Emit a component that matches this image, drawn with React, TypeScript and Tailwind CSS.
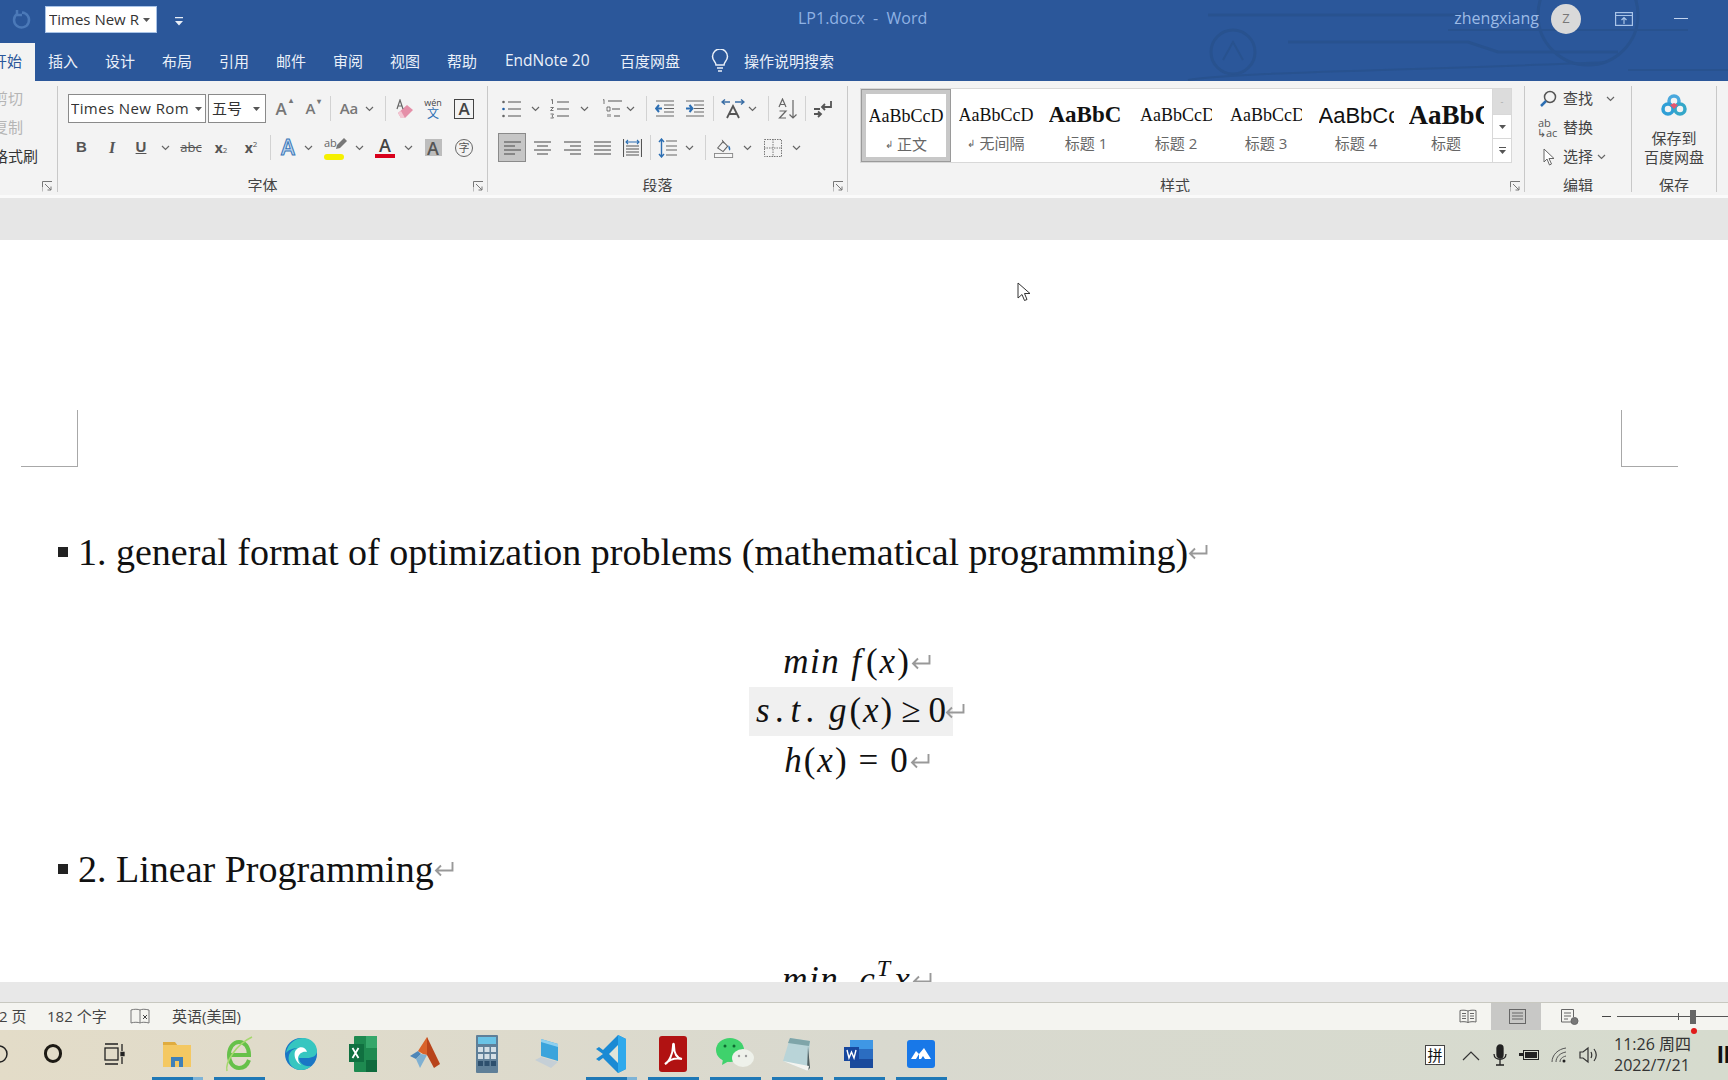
import React from 'react'

const SERIF = "[font-family:'Liberation_Serif','Noto_Sans_CJK_SC',serif]"

const Chev = ({ className = 'text-[#666]' }: { className?: string }) => (
  <svg width="9" height="6" viewBox="0 0 9 6" className={`shrink-0 ${className}`} fill="none" stroke="currentColor" strokeWidth="1.2">
    <path d="M1 1l3.5 3.5L8 1" />
  </svg>
)

const Tri = () => (
  <svg width="7" height="4" viewBox="0 0 7 4" className="shrink-0 text-[#555]" fill="currentColor">
    <path d="M0 0h7L3.5 4z" />
  </svg>
)

const Slot = ({ className, children }: { className: string; children?: React.ReactNode }) => (
  <div className={`flex h-full shrink-0 items-center justify-center ${className}`}>{children}</div>
)

const Sep = () => <div className="h-[25px] w-px shrink-0 bg-[#d2d2d2]" />

const Launcher = ({ className }: { className: string }) => (
  <svg width="11" height="11" viewBox="0 0 11 11" className={`absolute ${className}`} fill="none" stroke="#777" strokeWidth="1">
    <path d="M.5 6V.5H10M3 3l6 6M9 5.5V9H5.5" />
    <path d="M.5 6v4.5" stroke="#bbb" />
  </svg>
)

const Lines = ({ kind }: { kind: 'left' | 'center' | 'right' | 'justify' }) => {
  const rows = {
    left: ['M1 2h17', 'M1 6h11', 'M1 10h17', 'M1 14h11'],
    center: ['M1 2h17', 'M4 6h11', 'M1 10h17', 'M4 14h11'],
    right: ['M1 2h17', 'M7 6h11', 'M1 10h17', 'M7 14h11'],
    justify: ['M1 2h17', 'M1 6h17', 'M1 10h17', 'M1 14h17'],
  }[kind]
  return (
    <svg width="19" height="16" viewBox="0 0 19 16" fill="none" stroke="#555" strokeWidth="1.1">
      {rows.map((d) => <path key={d} d={d} />)}
    </svg>
  )
}

const ListIcon = ({ kind }: { kind: 'bullet' | 'number' | 'multi' }) => (
  <svg width="22" height="20" viewBox="0 0 22 20" fill="none" stroke="#555" strokeWidth="1.1">
    {kind === 'bullet' && (
      <>
        <path d="M7 3h13M7 10h13M7 17h13" />
        <circle cx="2.5" cy="3" r="1.3" fill="#666" stroke="none" />
        <circle cx="2.5" cy="10" r="1.3" fill="#1f5fa8" stroke="none" />
        <circle cx="2.5" cy="17" r="1.3" fill="#666" stroke="none" />
      </>
    )}
    {kind === 'number' && (
      <>
        <path d="M8 3h12M8 10h12M8 17h12" />
        <path d="M2 1l1.5-.5V5M1.5 8.5h3l-3 3h3M1.5 15h3l-1.5 2 1.5 2h-3" strokeWidth=".8" />
      </>
    )}
    {kind === 'multi' && (
      <>
        <path d="M7 2h14M11 10h8M13 17h6" />
        <path d="M2 1l1-.5V5M6 8h3v4H6zM7 15v3M9 15v3" strokeWidth=".8" />
      </>
    )}
  </svg>
)

const Indent = ({ flip }: { flip?: boolean }) => (
  <svg width="20" height="17" viewBox="0 0 20 17" fill="none" stroke="#666" strokeWidth="1">
    <path d="M1 1h18M9 5h10M9 8.500h10M9 12h10M1 16h18" />
    <path d={flip ? 'M1 8.500h6M4.500 5l3 3.500-3 3.500' : 'M7 8.500H1M4 5L1 8.500 4 12'} stroke="#2d6fb3" strokeWidth="2" />
  </svg>
)

const Eraser = () => (
  <svg width="20" height="20" viewBox="0 0 20 20">
    <path d="M3 14l9-8 6 5-8 8H6z" fill="#e58fa8" />
    <path d="M3 14l3 5h4l-4-7z" fill="#f3c7d3" />
    <path d="M2 10L5 1l3 9M3 7h4" fill="none" stroke="#666" strokeWidth="1.200" />
  </svg>
)

const Highlighter = () => (
  <div className="relative flex h-[24px] w-[24px] flex-col items-start">
    <span className="text-[11px] leading-[13px] text-[#666]">ab</span>
    <svg width="14" height="14" viewBox="0 0 14 14" className="absolute right-0 top-[1px]">
      <path d="M10 1l3 3-7 7-4 1 1-4z" fill="#777" />
    </svg>
    <span className="absolute bottom-0 left-0 h-[6px] w-[20px] rounded-full bg-[#f5f000]" />
  </div>
)

const FillBucket = () => (
  <svg width="22" height="22" viewBox="0 0 22 22" fill="none">
    <path d="M4 11l6-7 5 5-5 6z" stroke="#666" strokeWidth="1.200" />
    <path d="M9 2l2 4" stroke="#666" />
    <path d="M16 8c2 2 2.500 4 1.500 6-1-1-2-2-1.500-6z" fill="#2d6fb3" />
    <rect x=".5" y="17" width="20" height="4.500" fill="#f6f6f6" stroke="#888" />
  </svg>
)

const Borders = () => (
  <svg width="18" height="18" viewBox="0 0 18 18" fill="none" stroke="#777" strokeWidth="1" strokeDasharray="1.500 1">
    <rect x=".5" y=".5" width="17" height="17" />
    <path d="M9 0v18M0 9h18" />
  </svg>
)

const Sort = () => (
  <svg width="20" height="22" viewBox="0 0 20 22" fill="none">
    <path d="M1 9l3.500-8L8 9M2 6.500h5" stroke="#666" strokeWidth="1.200" />
    <path d="M1.500 13H8l-6.500 7H8" stroke="#666" strokeWidth="1.200" />
    <path d="M15 2v18M11.500 16.500L15 20l3.500-3.500" stroke="#666" strokeWidth="1.200" />
  </svg>
)

const Pilcrow = () => (
  <svg width="20" height="18" viewBox="0 0 20 18" fill="none" stroke="#555" strokeWidth="1.800">
    <path d="M18 1v6h-9M12 4L9 7l3 3" />
    <path d="M1 9h6M1 14h7M5 11.500L8 14l-3 3" />
  </svg>
)

const Direction = () => (
  <svg width="24" height="20" viewBox="0 0 24 20" fill="none" stroke="#555" strokeWidth="1.800">
    <path d="M6 19l6-12 6 12M8 15h8" />
    <path d="M1 3h8M4 0.500L1 3l3 2.500M14 3h9M20 0.500L23 3l-3 2.500" stroke="#3a6ea5" strokeWidth="1.400" />
  </svg>
)

const LineSpacing = () => (
  <svg width="20" height="20" viewBox="0 0 20 20" fill="none">
    <path d="M8 3h11M8 8h11M8 12h11M8 17h11" stroke="#666" strokeWidth="1.100" />
    <path d="M3.500 1v18M1 4l2.500-3L6 4M1 16l2.500 3L6 16" stroke="#2d6fb3" strokeWidth="1.400" />
  </svg>
)

const Distributed = () => (
  <svg width="19" height="20" viewBox="0 0 19 20" fill="none" stroke="#555" strokeWidth="1.100">
    <path d="M.5 1v18M18.500 1v18M3 8h13M3 11h13M3 14h13M3 17h13" />
    <path d="M3 4h13M5 2L3 4l2 2M14 2l2 2-2 2" stroke="#2d6fb3" />
  </svg>
)

const BaiduCloud = () => (
  <svg width="28" height="24" viewBox="0 0 28 24" fill="none">
    <circle cx="14" cy="8" r="5" stroke="#4aa8dd" strokeWidth="3.500" />
    <circle cx="8" cy="16" r="5" stroke="#2f9fd6" strokeWidth="3.500" />
    <circle cx="20" cy="16" r="5" stroke="#34a7c9" strokeWidth="3.500" />
    <path d="M10 12l4-2 4 2-4 4z" fill="#e4566f" />
  </svg>
)

const Arrow = ({ className = '' }: { className?: string }) => (
  <svg width="20" height="16" viewBox="0 0 20 16" className={`relative shrink-0 ${className}`} fill="none" stroke="#999" strokeWidth="1.900">
    <path d="M18.500 1v8.500H2M7 4.500l-5 5 5 5" />
  </svg>
)

const Cursor = () => (
  <svg width="14" height="21" viewBox="0 0 14 21" className="absolute left-[1017px] top-[282px]" fill="#fff" stroke="#333" strokeWidth="1">
    <path d="M1 1v15l4-3.500 2.500 6 2.500-1-2.500-6H13z" />
  </svg>
)

const BackgroundArt = () => (
  <svg className="absolute right-0 top-0" width="640" height="81" viewBox="0 0 640 81" fill="none" stroke="#28528f" strokeWidth="2">
    <circle cx="145" cy="52" r="22" strokeWidth="3" />
    <path d="M135 60l10-18 10 18" />
    <path d="M120 15h260M200 42h180l30 10h120" strokeWidth="3" />
    <circle cx="500" cy="15" r="50" strokeWidth="3" />
    <path d="M100 80c40-8 240-10 420-18M360 30h240M540 70h100" />
  </svg>
)

const LABEL = 'absolute -bottom-[5px] left-0 right-0 text-center text-[15px] leading-[24px] text-[#444]'

const TitleBar = () => (
  <div className="relative flex h-[43px] shrink-0 items-start bg-[#2b579a]">
    <BackgroundArt />
    <svg width="22" height="22" viewBox="0 0 22 22" className="ml-[11px] mt-[8px] shrink-0" fill="none" stroke="#4b79b8" strokeWidth="2.500">
      <path d="M6 6a7.500 7.500 0 1 0 5-1.500M6 2v5h5" />
    </svg>
    <div className="relative ml-[12px] mt-[6px] flex h-[27px] w-[112px] items-center overflow-hidden border border-[#a9c4e8] bg-white pl-[3px] text-[15px] text-[#333]">
      <span className="w-[90px] overflow-hidden whitespace-nowrap">Times New Roman</span>
      <span className="ml-[4px]"><Tri /></span>
    </div>
    <svg width="10" height="12" viewBox="0 0 10 12" className="ml-[17px] mt-[16px]" fill="#e8eef7">
      <path d="M1 1h8v1.200H1zM1 5h8L5 9.500z" />
    </svg>
    <div className="relative ml-[614px] mt-[6px] whitespace-nowrap text-[16px] text-[#8fb2e4]">LP1.docx&nbsp; - &nbsp;Word</div>
    <div className="relative ml-[527px] mt-[6px] whitespace-nowrap text-[16px] text-[#9dbbe6]">zhengxiang</div>
    <div className="relative ml-[12px] mt-[4px] flex h-[30px] w-[30px] items-center justify-center rounded-full bg-[#d9d9d9] text-[13px] text-[#777]">Z</div>
    <svg width="18" height="14" viewBox="0 0 18 14" className="relative ml-[34px] mt-[12px]" fill="none" stroke="#a9c4e8" strokeWidth="1.200">
      <rect x=".6" y=".6" width="16.800" height="12.800" />
      <path d="M.6 3.500h16.800M9 12V6M6.500 8L9 5.500 11.500 8" />
    </svg>
    <div className="relative ml-[41px] mt-[18px] h-px w-[14px] bg-[#c3d4ee]" />
  </div>
)

const TABS = ['插入', '设计', '布局', '引用', '邮件', '审阅', '视图', '帮助']

const TabBar = () => (
  <div className="flex h-[38px] shrink-0 items-center bg-[#2b579a] pb-[2px] text-[15px] text-[#eaf0f9]">
    <div className="-mb-[2px] flex h-[38px] w-[35px] shrink-0 items-center justify-end overflow-hidden bg-[#f3f3f3] pb-[2px] pr-[13px] text-[#2b579a]">
      <span className="shrink-0 whitespace-nowrap">开始</span>
    </div>
    <div className="ml-[13px] flex gap-[27px]">
      {TABS.map((tab) => (
        <div key={tab} className="w-[30px] shrink-0 whitespace-nowrap text-center">{tab}</div>
      ))}
    </div>
    <div className="ml-[28px] w-[90px] shrink-0 whitespace-nowrap text-[15.500px]">EndNote 20</div>
    <div className="ml-[25px] whitespace-nowrap">百度网盘</div>
    <svg width="18" height="24" viewBox="0 0 18 24" className="ml-[31px]" fill="none" stroke="#eaf0f9" strokeWidth="1.500">
      <path d="M5 16c0-3-3.500-4.500-3.500-8.500a7.500 7.500 0 0 1 15 0C16.500 11.500 13 13 13 16z" />
      <path d="M6 19h6M7 22h4" />
    </svg>
    <div className="ml-[15px] whitespace-nowrap">操作说明搜索</div>
  </div>
)

const ClipboardGroup = () => (
  <div className="relative h-[106px] w-[58px] shrink-0 overflow-hidden border-r border-[#c8c8c8] text-[15px]">
    <div className="-ml-[7px] flex w-[60px] flex-col whitespace-nowrap">
      <span className="h-[29px] leading-[24px] text-[#b5b5b5]">剪切</span>
      <span className="h-[29px] leading-[24px] text-[#b5b5b5]">复制</span>
      <span className="leading-[24px] text-[#333]">格式刷</span>
    </div>
    <Launcher className="bottom-0 right-[4px]" />
  </div>
)

const FontGroup = () => (
  <div className="relative h-[106px] w-[430px] shrink-0 overflow-hidden border-r border-[#c8c8c8] pt-[8px] text-[#555]">
    <div className="flex h-[29px] items-center pl-[10px]">
      <div className="flex h-full w-[138px] shrink-0 items-center justify-between border border-[#8a8a8a] bg-white pl-[2px] pr-[3px] text-[15px] text-[#333]">
        <span className="w-[120px] overflow-hidden whitespace-nowrap tracking-[0.4px]">Times New Rom</span>
        <Tri />
      </div>
      <div className="ml-[2px] flex h-full w-[58px] shrink-0 items-center justify-between border border-[#8a8a8a] bg-white px-[3px] pr-[5px] text-[15px] text-[#333]">
        <span>五号</span>
        <Tri />
      </div>
      <Slot className="w-[30px] text-[17px] font-semibold text-[#777]"><span className="relative">A<span className="absolute -right-[6px] -top-[2px] text-[8px]">▴</span></span></Slot>
      <Slot className="w-[29px] text-[15px] font-semibold text-[#777]"><span className="relative">A<span className="absolute -right-[6px] -top-[2px] text-[8px]">▾</span></span></Slot>
      <Slot className="w-[10px]"><Sep /></Slot>
      <Slot className="w-[28px] text-[15px] font-semibold text-[#777]">Aa</Slot>
      <Slot className="w-[12px]"><Chev /></Slot>
      <Slot className="w-[20px]"><Sep /></Slot>
      <Slot className="w-[20px]"><Eraser /></Slot>
      <Slot className="w-[36px]">
        <div className="flex flex-col items-center text-[9px] leading-[10px] text-[#444]">
          <span>wén</span>
          <span className="text-[12px] leading-[12px] text-[#2d6fb3]">文</span>
        </div>
      </Slot>
      <Slot className="w-[26px]">
        <div className="flex h-[20px] w-[20px] items-center justify-center border border-[#444] text-[17px] font-semibold leading-none text-[#444]">A</div>
      </Slot>
    </div>
    <div className="mt-[10px] flex h-[29px] items-center pl-[8px]">
      <Slot className="w-[31px] [font-family:'Liberation_Sans'] text-[15px] font-bold">B</Slot>
      <Slot className="w-[30px] [font-family:'Liberation_Serif'] text-[16px] font-bold italic">I</Slot>
      <Slot className="w-[28px] [font-family:'Liberation_Sans'] text-[15px] font-bold underline">U</Slot>
      <Slot className="w-[20px]"><Chev /></Slot>
      <Slot className="w-[32px] text-[13px] line-through">abc</Slot>
      <Slot className="w-[28px] text-[14px] font-bold">x<sub className="text-[8px] font-normal">2</sub></Slot>
      <Slot className="w-[32px] text-[14px] font-bold">x<sup className="text-[8px] font-normal">2</sup></Slot>
      <Slot className="w-[6px]"><Sep /></Slot>
      <Slot className="w-[30px] text-[21px] font-semibold text-[#bcd6f0] [-webkit-text-stroke:1px_#3c78b8]">A</Slot>
      <Slot className="w-[10px]"><Chev /></Slot>
      <Slot className="ml-[6px] w-[34px]"><Highlighter /></Slot>
      <Slot className="w-[12px]"><Chev /></Slot>
      <Slot className="w-[40px]">
        <div className="flex flex-col items-center">
          <span className="text-[18px] font-semibold leading-[17px] text-[#444]">A</span>
          <span className="h-[4px] w-[20px] bg-[#d9001b]" />
        </div>
      </Slot>
      <Slot className="w-[6px]"><Chev /></Slot>
      <Slot className="w-[44px]">
        <div className="flex h-[17px] w-[17px] items-center justify-center bg-[#bdbdbd] text-[18px] font-semibold leading-none">A</div>
      </Slot>
      <Slot className="w-[18px]">
        <div className="flex h-[18px] w-[18px] shrink-0 items-center justify-center rounded-full border border-[#666] text-[11px] leading-none">字</div>
      </Slot>
    </div>
    <div className={`${LABEL} pr-[20px]`}>字体</div>
    <Launcher className="bottom-0 right-[3px]" />
  </div>
)

const ParagraphGroup = () => (
  <div className="relative h-[106px] w-[360px] shrink-0 overflow-hidden border-r border-[#c8c8c8] pt-[8px]">
    <div className="flex h-[29px] items-center pl-[10px]">
      <Slot className="w-[28px]"><ListIcon kind="bullet" /></Slot>
      <Slot className="w-[18px]"><Chev /></Slot>
      <Slot className="w-[32px]"><ListIcon kind="number" /></Slot>
      <Slot className="w-[16px]"><Chev /></Slot>
      <Slot className="ml-[4px] w-[32px]"><ListIcon kind="multi" /></Slot>
      <Slot className="w-[4px]"><Chev /></Slot>
      <Slot className="ml-[10px] w-[8px]"><Sep /></Slot>
      <Slot className="w-[30px]"><Indent /></Slot>
      <Slot className="w-[30px]"><Indent flip /></Slot>
      <Slot className="w-[6px]"><Sep /></Slot>
      <Slot className="w-[34px]"><Direction /></Slot>
      <Slot className="w-[4px]"><Chev /></Slot>
      <Slot className="ml-[10px] w-[8px]"><Sep /></Slot>
      <Slot className="w-[32px]"><Sort /></Slot>
      <Slot className="w-[2px]"><Sep /></Slot>
      <Slot className="w-[34px]"><Pilcrow /></Slot>
    </div>
    <div className="mt-[10px] flex h-[29px] items-center pl-[10px]">
      <Slot className="w-[28px] border border-[#8a8a8a] bg-[#c6c6c6]"><Lines kind="left" /></Slot>
      <Slot className="w-[32px]"><Lines kind="center" /></Slot>
      <Slot className="w-[28px]"><Lines kind="right" /></Slot>
      <Slot className="w-[32px]"><Lines kind="justify" /></Slot>
      <Slot className="w-[28px]"><Distributed /></Slot>
      <Slot className="w-[8px]"><Sep /></Slot>
      <Slot className="w-[28px]"><LineSpacing /></Slot>
      <Slot className="w-[14px]"><Chev /></Slot>
      <Slot className="w-[18px]"><Sep /></Slot>
      <Slot className="w-[20px]"><FillBucket /></Slot>
      <Slot className="w-[26px]"><Chev /></Slot>
      <Slot className="w-[26px]"><Borders /></Slot>
      <Slot className="w-[20px]"><Chev /></Slot>
    </div>
    <div className={`${LABEL} pr-[20px]`}>段落</div>
    <Launcher className="bottom-0 right-[3px]" />
  </div>
)

const STYLES = [
  { preview: 'AaBbCcD', label: '正文', mark: true, font: `${SERIF} w-[75px] text-[18px]` },
  { preview: 'AaBbCcD', label: '无间隔', mark: true, font: `${SERIF} w-[75px] text-[18px]` },
  { preview: 'AaBbC', label: '标题 1', mark: false, font: `${SERIF} w-[75px] text-[23px] font-bold` },
  { preview: 'AaBbCcDd', label: '标题 2', mark: false, font: `${SERIF} w-[72px] text-[18px]` },
  { preview: 'AaBbCcDd', label: '标题 3', mark: false, font: `${SERIF} w-[72px] text-[18px]` },
  { preview: 'AaBbCcDd', label: '标题 4', mark: false, font: "[font-family:'Liberation_Sans'] w-[75px] text-[22px] font-light" },
  { preview: 'AaBbCc', label: '标题', mark: false, font: `${SERIF} w-[75px] text-[27px] font-bold` },
]

const StylesGroup = () => (
  <div className="relative h-[106px] w-[677px] shrink-0 overflow-hidden border-r border-[#c8c8c8] pl-[12px] pt-[2px]">
    <div className="flex h-[75px] w-[652px] border border-[#d8d8d8] bg-white">
      {STYLES.map((style, index) => (
        <div
          key={style.label}
          className={`flex h-full w-[90px] shrink-0 flex-col items-center ${index === 0 ? 'border border-[#9a9a9a] shadow-[inset_0_0_0_4px_#c8c8c8]' : ''}`}
        >
          <div className={`mt-[11px] flex h-[30px] items-center justify-start overflow-hidden whitespace-nowrap text-[#111] ${style.font}`}>
            {style.preview}
          </div>
          <div className="mt-[3px] flex items-center whitespace-nowrap text-[15px] leading-[20px] text-[#666]">
            {style.mark && <span className="mr-[4px] text-[10px]">↲</span>}
            {style.label}
          </div>
        </div>
      ))}
      <div className="ml-auto flex w-[19px] shrink-0 flex-col border-l border-[#d8d8d8] text-[#555]">
        <div className="flex h-[26px] items-center justify-center border-b border-[#d8d8d8] bg-[#dcdcdc] text-[9px] text-[#aaa]">-</div>
        <div className="flex h-[24px] items-center justify-center border-b border-[#d8d8d8]"><Tri /></div>
        <div className="flex flex-1 flex-col items-center justify-center gap-[2px]">
          <span className="h-px w-[7px] bg-[#555]" />
          <Tri />
        </div>
      </div>
    </div>
    <div className={`${LABEL} pr-[22px]`}>样式</div>
    <Launcher className="bottom-0 right-[3px]" />
  </div>
)

const EditGroup = () => (
  <div className="relative h-[106px] w-[107px] shrink-0 overflow-hidden border-r border-[#c8c8c8] text-[15px] text-[#444]">
    <div className="-mt-[2px] flex h-[29px] items-center pl-[14px]">
      <svg width="18" height="18" viewBox="0 0 18 18" fill="none" className="shrink-0">
        <circle cx="11" cy="7" r="5.500" stroke="#555" strokeWidth="1.500" />
        <path d="M7 11l-5 5" stroke="#2d6fb3" strokeWidth="2.500" />
      </svg>
      <span className="ml-[6px] w-[30px] whitespace-nowrap">查找</span>
      <span className="ml-[13px]"><Chev /></span>
    </div>
    <div className="flex h-[29px] items-center pl-[13px]">
      <div className="flex w-[21px] shrink-0 flex-col text-[11px] leading-[10px] text-[#555]">
        <span>ab</span>
        <span className="-ml-[1px] whitespace-nowrap">↳ac</span>
      </div>
      <span className="ml-[4px] whitespace-nowrap">替换</span>
    </div>
    <div className="flex h-[29px] items-center pl-[18px]">
      <svg width="12" height="18" viewBox="0 0 12 18" fill="#fff" stroke="#666" className="shrink-0">
        <path d="M1 1v13l3-3 2.500 6 2-1-2.500-5.500H11z" />
      </svg>
      <span className="ml-[8px] whitespace-nowrap">选择</span>
      <span className="ml-[4px]"><Chev /></span>
    </div>
    <div className={LABEL}>编辑</div>
  </div>
)

const SaveGroup = () => (
  <div className="relative h-[106px] w-[85px] shrink-0 overflow-hidden border-r border-[#c8c8c8] text-[15px] text-[#444]">
    <div className="flex flex-col items-center pt-[7px]">
      <BaiduCloud />
      <span className="mt-[12px] leading-[19px]">保存到</span>
      <span className="leading-[19px]">百度网盘</span>
    </div>
    <div className={LABEL}>保存</div>
  </div>
)

const Ribbon = () => (
  <div className="flex h-[117px] shrink-0 items-start overflow-hidden border-b-[3px] border-[#fafafa] bg-[#f3f3f3] pt-[5px]">
    <ClipboardGroup />
    <FontGroup />
    <ParagraphGroup />
    <StylesGroup />
    <EditGroup />
    <SaveGroup />
  </div>
)

const Heading = ({ text, className }: { text: string; className: string }) => (
  <div className={`flex h-[50px] items-center pl-[58px] ${SERIF} text-[38px] leading-none text-[#111] ${className}`}>
    <span className="mr-[10px] h-[10px] w-[10px] shrink-0 bg-[#222]" />
    <span className="whitespace-nowrap">{text}</span>
    <Arrow />
  </div>
)

const Equation = ({ children, shaded }: { children: React.ReactNode; shaded?: boolean }) => (
  <div className="flex h-[49.500px] items-center justify-center pr-[14px]">
    <span className={`${SERIF} inline-flex h-full items-center whitespace-pre text-[35px] italic text-[#111] ${shaded ? 'bg-[#f0f0f0] pl-[7px] pr-[7px]' : ''}`}>
      {children}
    </span>
    <Arrow className={shaded ? '-ml-[8px]' : 'ml-[2px]'} />
  </div>
)

const Document = () => (
  <div className="relative h-[742px] shrink-0 overflow-hidden bg-white pt-[170px]">
    <div className="flex justify-between pl-[21px] pr-[50px]">
      <div className="h-[57px] w-[57px] border-b border-r border-[#a8a8a8]" />
      <div className="h-[57px] w-[57px] border-b border-l border-[#a8a8a8]" />
    </div>
    <Heading className="mt-[60px]" text="1. general format of optimization problems (mathematical programming)" />
    <div className="mt-[60px]">
      <Equation>
        <span className="tracking-[1.500px]">min</span>
        <span className="ml-[11px]">f</span>
        <span className="ml-[5px] not-italic">(</span>
        <span className="mx-[2px]">x</span>
        <span className="not-italic">)</span>
      </Equation>
      <Equation shaded>
        <span className="tracking-[6px]">s.t.</span>
        <span className="ml-[8px]">g</span>
        <span className="ml-[3px] not-italic">(</span>
        <span className="mx-[2px]">x</span>
        <span className="not-italic">)</span>
        <span className="ml-[9px] not-italic">≥</span>
        <span className="ml-[8px] not-italic">0</span>
      </Equation>
      <Equation>
        <span>h</span>
        <span className="ml-[2px] not-italic">(</span>
        <span className="mx-[2px]">x</span>
        <span className="not-italic">)</span>
        <span className="ml-[12px] not-italic">=</span>
        <span className="ml-[12px] not-italic">0</span>
      </Equation>
    </div>
    <Heading className="mt-[58px]" text="2. Linear Programming" />
    <div className="mt-[62px]">
      <Equation>
        <span className="tracking-[1.500px]">min</span>
        <span className="ml-[20px]">c</span>
        <span className="relative -top-[12px] ml-[2px] mr-[4px] text-[24px]">T</span>
        <span>x</span>
      </Equation>
    </div>
  </div>
)

const StatusBar = () => (
  <div className="flex h-[27px] shrink-0 items-center bg-[#f4f4f0] text-[15px] text-[#444]">
    <span className="-ml-[1px] w-[48px] shrink-0 whitespace-nowrap">2 页</span>
    <span className="w-[62px] shrink-0 whitespace-nowrap">182 个字</span>
    <svg width="20" height="18" viewBox="0 0 20 18" className="ml-[21px] shrink-0" fill="none" stroke="#777">
      <path d="M10 2C8 1 4 1 1 2v13c3-1 7-1 9 0 2-1 5-1 9 0V2c-4-1-7-1-9 0zM10 2v13" />
      <path d="M13 7l4 4M17 7l-4 4" stroke="#444" />
    </svg>
    <span className="ml-[22px] w-[71px] shrink-0 whitespace-nowrap">英语(美国)</span>
    <Slot className="ml-[1196px] w-[52px] pl-[6px]">
      <svg width="18" height="15" viewBox="0 0 18 15" fill="none" stroke="#666">
        <path d="M9 2C7 1 3 1 1 1.500V13c2-.5 6-.5 8 .5 2-1 6-1 8-.5V1.500C15 1 11 1 9 2zM9 2v11.500M3 4.500h4M3 7h4M3 9.500h4M11 4.500h4M11 7h4M11 9.500h4" />
      </svg>
    </Slot>
    <Slot className="w-[50px] bg-[#c8c8c6] pl-[3px]">
      <svg width="17" height="15" viewBox="0 0 17 15" fill="none" stroke="#666">
        <rect x=".5" y=".5" width="16" height="14" />
        <path d="M3 4h11M3 7h11M3 10h11" />
      </svg>
    </Slot>
    <Slot className="w-[56px] pl-[2px]">
      <svg width="18" height="16" viewBox="0 0 18 16" fill="none" stroke="#666">
        <path d="M12 13H.5V.5h12V8M3 4h7M3 7h7M3 10h4" />
        <circle cx="13.500" cy="12" r="3.500" fill="#777" />
      </svg>
    </Slot>
    <span className="ml-[5px] h-px w-[9px] shrink-0 bg-[#444]" />
    <div className="relative ml-[6px] flex h-full w-[115px] shrink-0 items-center">
      <div className="h-px w-full bg-[#555]" />
      <div className="absolute left-[61px] top-[10px] h-[7px] w-px bg-[#555]" />
      <div className="absolute left-[73px] top-[7px] h-[14px] w-[6px] bg-[#666]" />
    </div>
  </div>
)

const Explorer = () => (
  <svg width="30" height="30" viewBox="0 0 30 30">
    <path d="M1 3h12l3 4H1z" fill="#e0ac3f" />
    <rect x="1" y="6" width="28" height="22" fill="#f4c862" />
    <path d="M9 28v-10h12v10h-4v-6h-4v6z" fill="#3f80b8" />
  </svg>
)

const IE = () => (
  <svg width="30" height="40" viewBox="0 0 30 40" fill="none">
    <path d="M25 26c-2 6-6 8-10 8-6 0-10-6-10-13S9 8 15 8c6 0 10 5 10 13H6" stroke="#66c14a" strokeWidth="4" />
    <path d="M3 37c-2-8 8-26 25-34" stroke="#a5d86d" strokeWidth="1.500" />
  </svg>
)

const Edge = () => (
  <svg width="34" height="36" viewBox="0 0 34 36">
    <circle cx="17" cy="18" r="16" fill="#1a76c5" />
    <path d="M2 17C4 6 13 2 19 2c8 0 14 6 14 13 0 5-5 7-10 7H15c0 5 5 9 12 8-3 3-7 4-10 4-9 0-14-8-12-15 2-5 6-7 10-7-6 0-11 2-13 5z" fill="#36c6c0" />
    <path d="M14 22c1-5 5-7 9-6-1-5-7-6-10-3-3 2-3 7-1 11 1 2 3 4 5 5-2-2-3-4-3-7z" fill="#fff" />
  </svg>
)

const Excel = () => (
  <svg width="30" height="38" viewBox="0 0 30 38">
    <rect x="6" y="1" width="23" height="36" rx="1" fill="#1e8a50" />
    <rect x="18" y="1" width="11" height="12" fill="#35a76a" />
    <rect x="18" y="25" width="11" height="12" fill="#0f6b3d" />
    <rect x="1" y="9" width="15" height="18" fill="#107040" />
    <path d="M4.500 13l6 10M10.500 13l-6 10" stroke="#fff" strokeWidth="1.800" />
  </svg>
)

const Matlab = () => (
  <svg width="32" height="36" viewBox="0 0 32 36">
    <path d="M1 20l8-5 3 3-5 5z" fill="#4d86b8" />
    <path d="M9 15L18 1l7 22-7-4-4-1z" fill="#d9632b" />
    <path d="M18 1l13 27-6 4-7-13z" fill="#b8441b" />
    <path d="M7 23l5-5 6 1-7 13z" fill="#7fb0d2" />
  </svg>
)

const Calc = () => (
  <svg width="24" height="40" viewBox="0 0 24 40">
    <rect x="1" y="1" width="22" height="38" rx="1" fill="#5f7f98" />
    <rect x="3" y="3" width="18" height="7" fill="#69c3e6" />
    {[13, 20, 27].map((y) => [3, 9.500, 16].map((x) => <rect key={`${x}-${y}`} x={x} y={y} width="5" height="5" fill={y === 27 ? '#2d4f6d' : '#d4dfe6'} />))}
  </svg>
)

const Laptop = () => (
  <svg width="32" height="36" viewBox="0 0 32 36">
    <path d="M8 3l17 5v17L8 20z" fill="#3ba4dc" />
    <path d="M8 3l17 5v3L8 6z" fill="#8fd0ef" />
    <path d="M2 24l6-3 17 5-7 6z" fill="#c5cfd6" />
  </svg>
)

const VSCode = () => (
  <svg width="32" height="40" viewBox="0 0 32 40">
    <path d="M23 1l8 4v30l-8 4L8 24l-4 3-3-2 7-5-7-5 3-2 4 3z" fill="#1a8ad4" />
    <path d="M23 1l8 4v30l-8 4z" fill="#2fa9ec" />
    <path d="M23 11v18l-9-9z" fill="#dfe4d9" />
  </svg>
)

const Acrobat = () => (
  <svg width="28" height="36" viewBox="0 0 28 36">
    <rect width="28" height="36" rx="3" fill="#b11212" />
    <path d="M6 28c4-2 8-10 8-18 0-3 1-3 1 0 0 7 3 12 8 13-5-1-12 0-17 5z" fill="none" stroke="#fff" strokeWidth="2" />
  </svg>
)

const WeChat = () => (
  <svg width="40" height="34" viewBox="0 0 40 34">
    <ellipse cx="15" cy="13" rx="14" ry="12" fill="#3fd26c" />
    <path d="M8 22l-1 6 7-4z" fill="#3fd26c" />
    <circle cx="10" cy="9" r="1.500" fill="#0e6b31" />
    <circle cx="19" cy="9" r="1.500" fill="#0e6b31" />
    <ellipse cx="28" cy="21" rx="11" ry="9" fill="#eef1ea" />
    <circle cx="24" cy="19" r="1.200" fill="#999" />
    <circle cx="31" cy="19" r="1.200" fill="#999" />
  </svg>
)

const Notepad = () => (
  <svg width="30" height="36" viewBox="0 0 30 36">
    <path d="M8 2l20 3-2 30L1 25z" fill="#b9d4d8" />
    <path d="M8 2l20 3-1 5L6 7z" fill="#7fa5a9" />
    <path d="M26 10l2 22-3 3z" fill="#4f5e60" />
    <path d="M1 25l25 10 1-5z" fill="#f4f4f0" />
  </svg>
)

const WordIcon = () => (
  <svg width="30" height="30" viewBox="0 0 30 30">
    <rect x="6" y="1" width="23" height="28" rx="1" fill="#2b6dc1" />
    <rect x="6" y="1" width="23" height="9" fill="#3f97e5" />
    <rect x="6" y="20" width="23" height="9" fill="#1a4a9c" />
    <rect x="0" y="8" width="15" height="14" fill="#17479e" />
    <path d="M3 11l2 8 2.500-6 2.500 6 2-8" fill="none" stroke="#fff" strokeWidth="1.400" />
  </svg>
)

const BlueApp = () => (
  <svg width="28" height="28" viewBox="0 0 28 28">
    <rect width="28" height="28" rx="3" fill="#1878e8" />
    <path d="M4 19l5-8 3 3-3 5zM12 14l5-6 7 11h-6l-2-3-2 3h-2z" fill="#fff" />
  </svg>
)

const CortanaSearch = () => (
  <svg width="10" height="22" viewBox="0 0 10 22" className="absolute left-0 top-[15px]" fill="none" stroke="#222" strokeWidth="1.500">
    <circle cx="-1" cy="9" r="8" />
  </svg>
)

const Cortana = () => (
  <div className="h-[19px] w-[18px] rounded-full border-[3px] border-[#1d1a14]" />
)

const TaskView = () => (
  <svg width="22" height="24" viewBox="0 0 22 24" fill="none" stroke="#222" strokeWidth="1.300">
    <rect x="1" y="6" width="13" height="12" />
    <path d="M1 2h13M1 22h13M18 2v7M18 15v7" />
    <path d="M17 10.500h3v3h-3z" fill="#222" />
  </svg>
)

const APPS = [
  { icon: <Cortana /> },
  { icon: <TaskView /> },
  { icon: <Explorer />, open: true, multi: true },
  { icon: <IE />, open: true },
  { icon: <Edge /> },
  { icon: <Excel /> },
  { icon: <Matlab /> },
  { icon: <Calc /> },
  { icon: <Laptop /> },
  { icon: <VSCode />, open: true, multi: true },
  { icon: <Acrobat />, open: true },
  { icon: <WeChat />, open: true },
  { icon: <Notepad />, open: true },
  { icon: <WordIcon />, open: true },
  { icon: <BlueApp />, open: true },
]

const Tray = () => (
  <div className="ml-auto flex h-full shrink-0 items-center text-[#333]">
    <div className="flex h-[20px] w-[20px] shrink-0 items-center justify-center border border-[#444] bg-white text-[15px] leading-none text-[#111]">拼</div>
    <svg width="18" height="11" viewBox="0 0 18 11" className="ml-[17px]" fill="none" stroke="#333" strokeWidth="1.200">
      <path d="M1 10l8-8 8 8" />
    </svg>
    <svg width="14" height="22" viewBox="0 0 14 22" className="ml-[13px]" fill="none" stroke="#222" strokeWidth="1.300">
      <rect x="4" y="1" width="6" height="13" rx="3" fill="#222" />
      <path d="M1 10c0 7 12 7 12 0M7 16v5M3 21h8" />
    </svg>
    <svg width="20" height="12" viewBox="0 0 20 12" className="ml-[12px]" fill="none" stroke="#222">
      <rect x="4.500" y="1.500" width="15" height="9" />
      <rect x="6" y="3" width="12" height="6" fill="#222" stroke="none" />
      <path d="M0 4h4v3H0z" fill="#222" stroke="none" />
    </svg>
    <svg width="16" height="16" viewBox="0 0 16 16" className="ml-[12px]" fill="none" stroke="#555">
      <path d="M1 15C1 8 7 2 15 1M5 15c0-5 4-9 10-10M9 15c0-3 2-5 6-6" />
      <circle cx="13" cy="14" r="1.500" fill="#222" stroke="none" />
    </svg>
    <svg width="20" height="18" viewBox="0 0 20 18" className="ml-[12px]" fill="none" stroke="#333" strokeWidth="1.200">
      <path d="M1 6h3l5-4v14l-5-4H1zM12 6c1 2 1 4 0 6M15 3c3 4 3 8 0 12" />
    </svg>
    <div className="relative ml-[15px] flex w-[80px] shrink-0 flex-col text-[16px] leading-[21px] text-[#333]">
      <span className="whitespace-nowrap">11:26 周四</span>
      <span className="whitespace-nowrap">2022/7/21</span>
      <span className="absolute -top-[6px] -right-[3px] h-[6px] w-[6px] rounded-full bg-[#e01a1a]" />
    </div>
    <div className="ml-[22px] flex w-[12px] overflow-hidden [font-family:'Liberation_Sans'] text-[24px] font-bold leading-none text-[#111]">
      <span className="ml-[1px]">IN</span>
    </div>
  </div>
)

const Taskbar = () => (
  <div className="relative flex h-[50px] shrink-0 items-center bg-linear-to-r from-[#e3dcc8] via-[#d9d9cf] to-[#d6dbce] pl-[22px]">
    <CortanaSearch />
    {APPS.map((app, index) => (
      <div key={index} className="relative flex h-full w-[62px] shrink-0 items-center justify-center pb-[3px]">
        {app.icon}
        {app.open && (
          <div className="absolute bottom-0 left-[6px] h-[3px] w-[51px] bg-[#1f78b6]">
            {app.multi && <div className="ml-auto h-full w-[10px] bg-[#7eb3d6]" />}
          </div>
        )}
      </div>
    ))}
    <Tray />
  </div>
)

export default function App() {
  return (
    <div className="relative flex h-[1080px] w-[1728px] flex-col overflow-hidden [font-family:'Open_Sans','Noto_Sans_CJK_SC',sans-serif]">
      <TitleBar />
      <TabBar />
      <Ribbon />
      <div className="h-[42px] shrink-0 bg-[#e6e6e6]" />
      <Document />
      <div className="h-[21px] shrink-0 border-b border-[#c8c8c0] bg-[#e8e8e8]" />
      <StatusBar />
      <Taskbar />
      <Cursor />
    </div>
  )
}
